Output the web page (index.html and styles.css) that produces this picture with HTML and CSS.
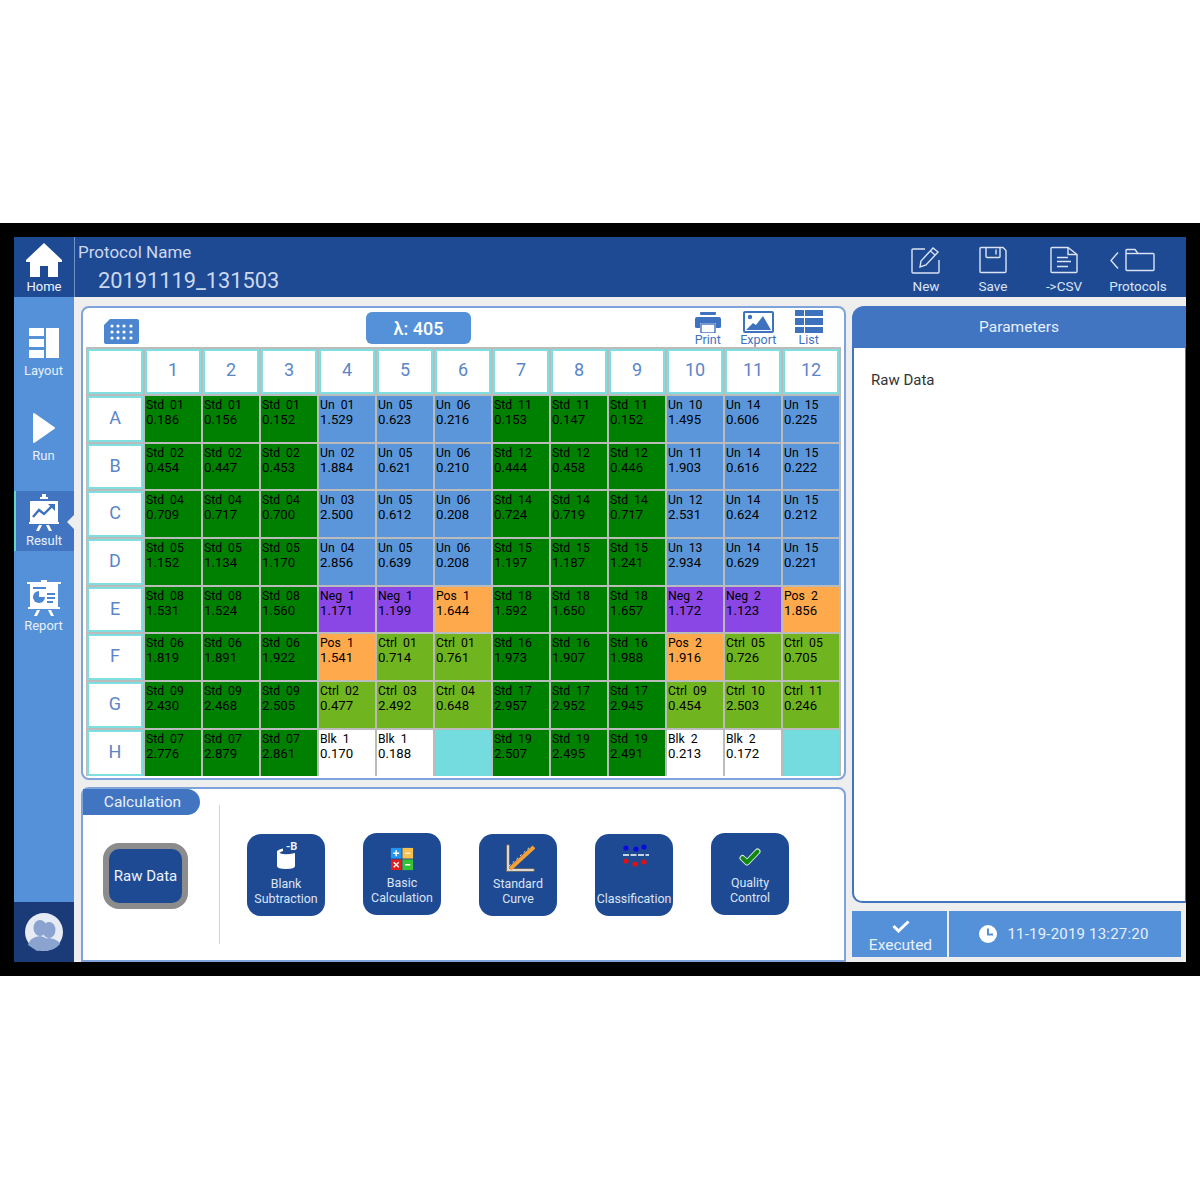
FILE: index.html
```html
<!DOCTYPE html>
<html lang="en">
<head>
  <meta charset="UTF-8">
  <title>Plate Reader - Result</title>
  <link rel="stylesheet" href="styles.css">
</head>
<body>
  <div class="frame">
    <div class="app">
      <aside class="side">
        <a class="home">
          <svg class="home-icon" viewBox="0 0 36 34"><path fill="#fff" d="M18 0 L36 17 L36 19 L32 19 L32 34 L22 34 L22 23 L14 23 L14 34 L4 34 L4 19 L0 19 L0 17 Z"/></svg>
          <span>Home</span>
        </a>
        <nav class="nav">
          <a class="nav-item">
            <svg width="30" height="30" viewBox="0 0 30 30"><g fill="#fff"><rect x="0" y="0" width="15" height="8"/><rect x="0" y="11" width="15" height="8"/><rect x="0" y="22" width="15" height="8"/><rect x="17" y="0" width="13" height="30"/></g></svg>
            <span>Layout</span>
          </a>
          <a class="nav-item">
            <svg width="22" height="30" viewBox="0 0 22 30"><path fill="#fff" stroke="#fff" stroke-width="2" stroke-linejoin="round" d="M1 1 L21 15 L1 29 Z"/></svg>
            <span>Run</span>
          </a>
          <a class="nav-item nav-active nav-tall">
            <svg width="30" height="37" viewBox="0 0 30 37"><g fill="#fff"><rect x="13" y="0" width="4" height="3"/><rect x="11" y="3" width="8" height="2"/><rect x="1" y="7" width="28" height="21"/><rect x="0" y="28" width="30" height="2"/><path d="M10 31 h3 l-3 6 h-3 z M17 31 h3 l3 6 h-3 z"/></g><path fill="none" stroke="#3f72be" stroke-width="2.4" d="M4 23 L10 16 L15 20 L23 12"/><path fill="#3f72be" d="M19 10 h7 v7 z"/></svg>
            <span>Result</span>
          </a>
          <a class="nav-item nav-tall">
            <svg width="34" height="36" viewBox="0 0 34 36"><g fill="#fff"><rect x="14" y="0" width="6" height="2"/><rect x="0" y="2" width="34" height="2"/><rect x="3" y="4" width="28" height="23"/><rect x="1" y="27" width="32" height="2"/><path d="M10 30 h3 l-3 6 h-3 z M21 30 h3 l3 6 h-3 z"/></g><rect x="6" y="7" width="13" height="2" fill="#4d86d0"/><circle cx="12" cy="17" r="6" fill="#4d86d0"/><path d="M12 17 V11 H18 V17 Z" fill="#fff"/><g fill="#4d86d0"><rect x="20" y="13" width="8" height="2"/><rect x="20" y="17" width="8" height="2"/><rect x="20" y="21" width="6" height="2"/></g></svg>
            <span>Report</span>
          </a>
        </nav>
        <div class="user">
          <svg width="38" height="38" viewBox="0 0 38 38"><circle cx="19" cy="19" r="19" fill="#e6ebf6"/><g fill="#8aa3cf"><ellipse cx="15" cy="15" rx="6.5" ry="8"/><path d="M3 32 C5 25 10 24 15 23 C20 24 24 25 25 36 L12 38 Z"/><ellipse cx="24" cy="17" rx="6.5" ry="8"/><path d="M12 36 C13 28 18 26 24 25 C30 26 34 28 35 31 C31 36 24 38 19 38 Z"/></g></svg>
        </div>
      </aside>

      <div class="main">
        <header class="top">
          <div class="protocol">
            <div class="protocol-label">Protocol Name</div>
            <div class="protocol-name">20191119_131503</div>
          </div>
          <div class="top-tools">
            <a class="top-tool">
              <svg width="30" height="28" viewBox="0 0 30 28" fill="none" stroke="#dbe4f4" stroke-width="1.4"><path d="M14 3 H2 Q1 3 1 4 V26 Q1 27 2 27 H27 Q28 27 28 26 V14"/><path d="M9 21 L10 15 L22 2 L27 6 L15 19 Z"/><path d="M19.5 5 L24 9"/></svg>
              <span>New</span>
            </a>
            <a class="top-tool">
              <svg width="28" height="27" viewBox="0 0 28 27" fill="none" stroke="#dbe4f4" stroke-width="1.4"><path d="M2 1 H24 L27 4 V25 Q27 26 26 26 H2 Q1 26 1 25 V2 Q1 1 2 1 Z"/><path d="M7 1 V10 Q7 11 8 11 H20 Q21 11 21 10 V1"/><path d="M17 3 V8"/></svg>
              <span>Save</span>
            </a>
            <a class="top-tool tool-csv">
              <svg width="28" height="27" viewBox="0 0 28 27" fill="none" stroke="#dbe4f4" stroke-width="1.4"><path d="M2 1 H18 L27 8 V25 Q27 26 26 26 H2 Q1 26 1 25 V2 Q1 1 2 1 Z"/><path d="M18 1 V8 H27"/><path d="M7 11 H18 M7 15 H21 M7 20 H18"/></svg>
              <span>-&gt;CSV</span>
            </a>
            <a class="top-tool tool-protocols">
              <svg width="58" height="27" viewBox="0 0 58 27" fill="none" stroke="#dbe4f4" stroke-width="1.4"><path d="M9 6 L2 14 L9 22"/><path d="M17 23 V4 Q17 3 18 3 H26 L29 7 H44 Q45 7 45 8 V23 Q45 24 44 24 H18 Q17 24 17 23 Z"/><path d="M29 7 H17"/></svg>
              <span>Protocols</span>
            </a>
          </div>
        </header>

        <div class="content">
          <div class="left">
            <section class="panel plate">
              <div class="plate-bar">
                <svg class="plate-icon" width="35" height="25" viewBox="0 0 35 25"><path fill="#4d86d0" d="M6 0 H33 Q35 0 35 2 V23 Q35 25 33 25 H2 Q0 25 0 23 V6 Z"/><g fill="#fff"><circle cx="8" cy="7" r="1.6"/><circle cx="14" cy="7" r="1.6"/><circle cx="20" cy="7" r="1.6"/><circle cx="27" cy="7" r="1.6"/><circle cx="8" cy="13" r="1.6"/><circle cx="14" cy="13" r="1.6"/><circle cx="20" cy="13" r="1.6"/><circle cx="27" cy="13" r="1.6"/><circle cx="8" cy="19" r="1.6"/><circle cx="14" cy="19" r="1.6"/><circle cx="20" cy="19" r="1.6"/><circle cx="27" cy="19" r="1.6"/></g></svg>
                <button class="wave">λ: 405</button>
                <div class="plate-tools">
                  <a class="plate-tool">
                    <svg width="26" height="21" viewBox="0 0 26 21"><g fill="#3f72be"><rect x="5" y="0" width="16" height="3" rx="1"/><path d="M2 5 H24 Q26 5 26 7 V15 Q26 16 24 16 H21 V11 H5 V16 H2 Q0 16 0 15 V7 Q0 5 2 5 Z"/></g><rect x="6" y="12" width="14" height="9" fill="#fff" stroke="#3f72be" stroke-width="1.4"/></svg>
                    <span>Print</span>
                  </a>
                  <a class="plate-tool">
                    <svg width="31" height="22" viewBox="0 0 31 22"><rect x="1" y="1" width="29" height="20" rx="1" fill="#fff" stroke="#3f72be" stroke-width="2"/><circle cx="7" cy="6" r="2.2" fill="#3f72be"/><path fill="#3f72be" d="M3 19 L10 12 L13 14 L20 5 L28 19 Z"/></svg>
                    <span>Export</span>
                  </a>
                  <a class="plate-tool">
                    <svg width="28" height="23" viewBox="0 0 28 23"><g fill="#3f72be"><rect x="0" y="0" width="9" height="6"/><rect x="10" y="0" width="18" height="6"/><rect x="0" y="8" width="9" height="7"/><rect x="10" y="8" width="18" height="7"/><rect x="0" y="17" width="9" height="6"/><rect x="10" y="17" width="18" height="6"/></g></svg>
                    <span>List</span>
                  </a>
                </div>
              </div>

              <div class="grid">
                <div class="hd hd-col"></div>
                <div class="hd hd-col">1</div><div class="hd hd-col">2</div><div class="hd hd-col">3</div><div class="hd hd-col">4</div><div class="hd hd-col">5</div><div class="hd hd-col">6</div><div class="hd hd-col">7</div><div class="hd hd-col">8</div><div class="hd hd-col">9</div><div class="hd hd-col">10</div><div class="hd hd-col">11</div><div class="hd hd-col">12</div>

                <div class="hd">A</div>
                <div class="well std"><b>Std 01</b>0.186</div><div class="well std"><b>Std 01</b>0.156</div><div class="well std"><b>Std 01</b>0.152</div>
                <div class="well un"><b>Un 01</b>1.529</div><div class="well un"><b>Un 05</b>0.623</div><div class="well un"><b>Un 06</b>0.216</div>
                <div class="well std"><b>Std 11</b>0.153</div><div class="well std"><b>Std 11</b>0.147</div><div class="well std"><b>Std 11</b>0.152</div>
                <div class="well un"><b>Un 10</b>1.495</div><div class="well un"><b>Un 14</b>0.606</div><div class="well un"><b>Un 15</b>0.225</div>

                <div class="hd">B</div>
                <div class="well std"><b>Std 02</b>0.454</div><div class="well std"><b>Std 02</b>0.447</div><div class="well std"><b>Std 02</b>0.453</div>
                <div class="well un"><b>Un 02</b>1.884</div><div class="well un"><b>Un 05</b>0.621</div><div class="well un"><b>Un 06</b>0.210</div>
                <div class="well std"><b>Std 12</b>0.444</div><div class="well std"><b>Std 12</b>0.458</div><div class="well std"><b>Std 12</b>0.446</div>
                <div class="well un"><b>Un 11</b>1.903</div><div class="well un"><b>Un 14</b>0.616</div><div class="well un"><b>Un 15</b>0.222</div>

                <div class="hd">C</div>
                <div class="well std"><b>Std 04</b>0.709</div><div class="well std"><b>Std 04</b>0.717</div><div class="well std"><b>Std 04</b>0.700</div>
                <div class="well un"><b>Un 03</b>2.500</div><div class="well un"><b>Un 05</b>0.612</div><div class="well un"><b>Un 06</b>0.208</div>
                <div class="well std"><b>Std 14</b>0.724</div><div class="well std"><b>Std 14</b>0.719</div><div class="well std"><b>Std 14</b>0.717</div>
                <div class="well un"><b>Un 12</b>2.531</div><div class="well un"><b>Un 14</b>0.624</div><div class="well un"><b>Un 15</b>0.212</div>

                <div class="hd">D</div>
                <div class="well std"><b>Std 05</b>1.152</div><div class="well std"><b>Std 05</b>1.134</div><div class="well std"><b>Std 05</b>1.170</div>
                <div class="well un"><b>Un 04</b>2.856</div><div class="well un"><b>Un 05</b>0.639</div><div class="well un"><b>Un 06</b>0.208</div>
                <div class="well std"><b>Std 15</b>1.197</div><div class="well std"><b>Std 15</b>1.187</div><div class="well std"><b>Std 15</b>1.241</div>
                <div class="well un"><b>Un 13</b>2.934</div><div class="well un"><b>Un 14</b>0.629</div><div class="well un"><b>Un 15</b>0.221</div>

                <div class="hd">E</div>
                <div class="well std"><b>Std 08</b>1.531</div><div class="well std"><b>Std 08</b>1.524</div><div class="well std"><b>Std 08</b>1.560</div>
                <div class="well neg"><b>Neg 1</b>1.171</div><div class="well neg"><b>Neg 1</b>1.199</div><div class="well pos"><b>Pos 1</b>1.644</div>
                <div class="well std"><b>Std 18</b>1.592</div><div class="well std"><b>Std 18</b>1.650</div><div class="well std"><b>Std 18</b>1.657</div>
                <div class="well neg"><b>Neg 2</b>1.172</div><div class="well neg"><b>Neg 2</b>1.123</div><div class="well pos"><b>Pos 2</b>1.856</div>

                <div class="hd">F</div>
                <div class="well std"><b>Std 06</b>1.819</div><div class="well std"><b>Std 06</b>1.891</div><div class="well std"><b>Std 06</b>1.922</div>
                <div class="well pos"><b>Pos 1</b>1.541</div><div class="well ctrl"><b>Ctrl 01</b>0.714</div><div class="well ctrl"><b>Ctrl 01</b>0.761</div>
                <div class="well std"><b>Std 16</b>1.973</div><div class="well std"><b>Std 16</b>1.907</div><div class="well std"><b>Std 16</b>1.988</div>
                <div class="well pos"><b>Pos 2</b>1.916</div><div class="well ctrl"><b>Ctrl 05</b>0.726</div><div class="well ctrl"><b>Ctrl 05</b>0.705</div>

                <div class="hd">G</div>
                <div class="well std"><b>Std 09</b>2.430</div><div class="well std"><b>Std 09</b>2.468</div><div class="well std"><b>Std 09</b>2.505</div>
                <div class="well ctrl"><b>Ctrl 02</b>0.477</div><div class="well ctrl"><b>Ctrl 03</b>2.492</div><div class="well ctrl"><b>Ctrl 04</b>0.648</div>
                <div class="well std"><b>Std 17</b>2.957</div><div class="well std"><b>Std 17</b>2.952</div><div class="well std"><b>Std 17</b>2.945</div>
                <div class="well ctrl"><b>Ctrl 09</b>0.454</div><div class="well ctrl"><b>Ctrl 10</b>2.503</div><div class="well ctrl"><b>Ctrl 11</b>0.246</div>

                <div class="hd">H</div>
                <div class="well std"><b>Std 07</b>2.776</div><div class="well std"><b>Std 07</b>2.879</div><div class="well std"><b>Std 07</b>2.861</div>
                <div class="well blk"><b>Blk 1</b>0.170</div><div class="well blk"><b>Blk 1</b>0.188</div><div class="well none"></div>
                <div class="well std"><b>Std 19</b>2.507</div><div class="well std"><b>Std 19</b>2.495</div><div class="well std"><b>Std 19</b>2.491</div>
                <div class="well blk"><b>Blk 2</b>0.213</div><div class="well blk"><b>Blk 2</b>0.172</div><div class="well none"></div>
              </div>
            </section>

            <section class="panel calc">
              <div class="calc-left">
                <div class="calc-tab">Calculation</div>
                <button class="raw">Raw Data</button>
              </div>
              <div class="calc-tools">
                <a class="calc-tool">
                  <svg width="40" height="34" viewBox="0 0 40 34"><path fill="#fff" d="M11 10 Q13 8 17 7.5 V10 Q14 11 13.5 12 Q19 14.5 29 12 V25 Q29 28 20 28 Q11 28 11 25 Z"/><text class="minus-b" x="20" y="9">-B</text></svg>
                  <span>Blank<br>Subtraction</span>
                </a>
                <a class="calc-tool tool-high tool-basic">
                  <svg width="24" height="24" viewBox="0 0 26 26"><rect x="1" y="1" width="11.5" height="11.5" fill="#2196f3"/><rect x="13.5" y="1" width="11.5" height="11.5" fill="#f7c04f"/><rect x="1" y="13.5" width="11.5" height="11.5" fill="#e51c1c"/><rect x="13.5" y="13.5" width="11.5" height="11.5" fill="#36c236"/><path stroke="#fff" stroke-width="1.6" d="M3.5 6.7 H10 M6.7 3.5 V10 M4 16.5 L9.5 22 M9.5 16.5 L4 22 M16.5 19.2 H22"/><path stroke="#fff" stroke-width="1.2" d="M16.5 6.7 H22"/></svg>
                  <span>Basic<br>Calculation</span>
                </a>
                <a class="calc-tool tool-curve">
                  <svg width="34" height="30" viewBox="0 0 34 30"><path fill="none" stroke="#666" stroke-width="4" stroke-linecap="round" d="M7 3 V27 H32"/><path fill="none" stroke="#d8d8d8" stroke-width="2" stroke-linecap="round" d="M7 3 V27 H32"/><path fill="none" stroke="#f5a033" stroke-width="4" d="M9 26 L33 4"/><path fill="none" stroke="#e8e8e8" stroke-width="1" stroke-dasharray="2 3" d="M8 23 L30 3"/></svg>
                  <span>Standard<br>Curve</span>
                </a>
                <a class="calc-tool">
                  <svg width="30" height="26" viewBox="0 0 30 26"><g fill="#0a0ae0"><circle cx="7" cy="7" r="2.6"/><circle cx="17" cy="8" r="2.6"/><circle cx="25" cy="6" r="2.6"/></g><path stroke="#fff" stroke-width="1.6" stroke-dasharray="6 1.5" d="M4 14 H30"/><g fill="#e01010"><circle cx="7" cy="20" r="2.6"/><circle cx="16" cy="23" r="2.6"/><circle cx="25" cy="21" r="2.6"/></g></svg>
                  <span class="tool-wide"><br>Classification</span>
                </a>
                <a class="calc-tool tool-high tool-check">
                  <svg width="22" height="18" viewBox="0 0 22 18"><path fill="none" stroke="#dfe8df" stroke-width="6" stroke-linecap="round" stroke-linejoin="round" d="M3.5 10 L8 14.5 L18.5 3.5"/><path fill="none" stroke="#0f8a0f" stroke-width="4" stroke-linecap="round" stroke-linejoin="round" d="M3.5 10 L8 14.5 L18.5 3.5"/></svg>
                  <span>Quality<br>Control</span>
                </a>
              </div>
            </section>
          </div>

          <div class="right">
            <section class="params">
              <div class="params-head">Parameters</div>
              <div class="params-body">Raw Data</div>
            </section>
            <div class="status">
              <div class="status-done">
                <svg width="18" height="13" viewBox="0 0 18 13"><path fill="none" stroke="#fff" stroke-width="3" d="M1.5 6 L6.5 11 L16.5 1.5"/></svg>
                <span>Executed</span>
              </div>
              <div class="status-time">
                <svg width="18" height="18" viewBox="0 0 18 18"><circle cx="9" cy="9" r="9" fill="#fff"/><path fill="none" stroke="#5591d8" stroke-width="2" d="M9 3.5 V9.5 H14"/></svg>
                <span>11-19-2019 13:27:20</span>
              </div>
            </div>
          </div>
        </div>
      </div>
    </div>
  </div>
</body>
</html>
```
FILE: styles.css
```css
:root {
  --dark-blue: #1e4a94;
  --mid-blue: #4175c2;
  --light-blue: #5591d8;
  --page-grey: #eeeeee;
  --panel-line: #7ea3da;
  --teal: #7fdfe0;
}

* {
  margin: 0;
  padding: 0;
  box-sizing: border-box;
}

body {
  background-color: #fff;
  font-family: Roboto, "Liberation Sans", sans-serif;
  padding-top: 223px;
}

.frame {
  background-color: #000;
  height: 753px;
  padding: 14px;
}

.app {
  display: flex;
  height: 725px;
  background-color: var(--page-grey);
}

/* left rail */
.side {
  width: 60px;
  display: flex;
  flex-direction: column;
  background-color: var(--light-blue);
  color: #e8f0fb;
  font-size: 13px;
}

.home {
  height: 60px;
  background-color: var(--dark-blue);
  display: flex;
  flex-direction: column;
  align-items: center;
  padding-top: 6px;
  color: #eef3fb;
}

.home-icon {
  width: 36px;
  height: 34px;
  margin-bottom: 2px;
}

.nav {
  flex: 1;
  display: flex;
  flex-direction: column;
  gap: 25px;
  padding-top: 24px;
}

.nav-item {
  position: relative;
  height: 60px;
  display: flex;
  flex-direction: column;
  align-items: center;
  justify-content: flex-end;
  gap: 5px;
  padding: 0 1px 3px 0;
}

.nav-tall {
  gap: 2px;
}

.nav-active {
  background-color: var(--mid-blue);
  border-left: 2px solid #5fd6c6;
  padding-right: 2px;
}

/* notch pointing at the page */
.nav-active::after {
  content: "";
  position: absolute;
  right: 0;
  top: 24px;
  border: 7px solid transparent;
  border-right-color: var(--page-grey);
  border-left-width: 0;
}

.user {
  height: 60px;
  background-color: #1a3a78;
  display: flex;
  align-items: center;
  justify-content: center;
}

.main {
  flex: 1;
  display: flex;
  flex-direction: column;
  min-width: 0;
}

/* header */
.top {
  height: 60px;
  background-color: var(--dark-blue);
  border-left: 1px solid #6f92c9;
  display: flex;
  justify-content: space-between;
}

.protocol {
  padding: 5px 0 0 3px;
  color: #cbd8ee;
}

.protocol-label {
  font-size: 17px;
  line-height: 20px;
}

.protocol-name {
  font-size: 21.8px;
  line-height: 28px;
  margin: 5px 0 0 20px;
}

.top-tools {
  display: flex;
  gap: 7px;
  padding: 9px 18px 0 0;
}

.top-tool {
  width: 60px;
  display: flex;
  flex-direction: column;
  align-items: center;
  color: #dbe4f4;
  font-size: 13.5px;
}

.top-tool svg {
  height: 28px;
  margin-bottom: 4px;
}

.tool-csv {
  margin-left: 4px;
}

.tool-protocols {
  margin-left: 7px;
}

.content {
  flex: 1;
  display: flex;
  gap: 6px;
  padding: 9px 0 0 7px;
  min-height: 0;
}

.left {
  width: 765px;
  display: flex;
  flex-direction: column;
  gap: 7px;
}

.panel {
  background-color: #fff;
  border: 2px solid var(--panel-line);
  border-radius: 8px;
}

/* plate */
.plate {
  height: 474px;
  padding: 0 3px;
}

.plate-bar {
  height: 39px;
  display: flex;
  align-items: flex-start;
}

.plate-icon {
  margin: 11px 0 0 18px;
}

.wave {
  width: 105px;
  height: 32px;
  margin: 4px 0 0 227px;
  border: 0;
  border-radius: 6px;
  background-color: var(--light-blue);
  color: #fff;
  font-family: inherit;
  font-size: 18px;
  font-weight: 500;
}

.plate-tools {
  margin-left: auto;
  display: flex;
  padding-right: 7px;
}

.plate-tool {
  width: 50.5px;
  height: 39px;
  display: flex;
  flex-direction: column;
  align-items: center;
  justify-content: flex-end;
  color: #3f72be;
  font-size: 12.5px;
  line-height: 14px;
}

.grid {
  display: grid;
  grid-template-columns: repeat(13, 56px);
  grid-template-rows: 45px repeat(8, 45.7px);
  gap: 2px;
  padding: 2px 0 0 1px;
  width: 755px;
  background-color: #bbb;
}

.hd {
  background-color: #fff;
  border: 2px solid var(--teal);
  color: #5a86c8;
  font-size: 18px;
  padding-bottom: 3px;
  display: flex;
  align-items: center;
  justify-content: center;
}

.hd-col {
  padding-bottom: 5px;
}

.well {
  color: #000;
  font-size: 13.2px;
  line-height: 15px;
  padding: 2px 0 0 1px;
}

.well b {
  display: block;
  font-size: 12.2px;
  font-weight: 400;
  line-height: 14px;
  word-spacing: 3px;
}

.std { background-color: #008000; }
.un { background-color: #5a96d9; }
.neg { background-color: #8a47e6; }
.pos { background-color: #ffa94d; }
.ctrl { background-color: #70b520; }
.blk { background-color: #fff; }
.none { background-color: #74dcdf; }

/* calculation */
.calc {
  flex: 1;
  border-radius: 8px 8px 0 0;
  display: flex;
}

.calc-left {
  width: 136px;
}

.calc-tab {
  width: 117px;
  height: 26px;
  background-color: var(--mid-blue);
  border-radius: 0 13px 13px 0;
  color: #e8f0fb;
  font-size: 15.5px;
  line-height: 27px;
  padding-left: 2px;
  text-align: center;
}

.raw {
  display: block;
  width: 85px;
  height: 66px;
  margin: 28px 0 0 20px;
  border: 6px solid #8c8c8c;
  border-radius: 16px;
  background-color: var(--dark-blue);
  color: #eef3fb;
  font-family: inherit;
  font-size: 15px;
}

.calc-tools {
  height: 139px;
  margin-top: 16px;
  border-left: 1px solid #c9d6ec;
  padding: 29px 0 0 27px;
  display: flex;
  align-items: flex-start;
  gap: 38px;
}

.calc-tool {
  width: 78px;
  height: 82px;
  background-color: var(--dark-blue);
  border-radius: 14px;
  color: #dbe4f4;
  font-size: 12.4px;
  line-height: 14.5px;
  text-align: center;
  display: flex;
  flex-direction: column;
  align-items: center;
  justify-content: flex-end;
  padding-bottom: 10px;
}

.calc-tool svg {
  margin-bottom: auto;
  margin-top: 7px;
}

.tool-high {
  margin-top: -1px;
}

.tool-basic svg {
  margin-top: 14px;
}

.tool-curve svg {
  margin-top: 9px;
}

.tool-check svg {
  margin-top: 15px;
}

.tool-wide {
  white-space: nowrap;
}

.minus-b {
  fill: #eef3fb;
  font-size: 11px;
  font-weight: 700;
  font-family: Roboto, sans-serif;
}

/* right column */
.right {
  flex: 1;
  display: flex;
  flex-direction: column;
}

.params {
  height: 597px;
  display: flex;
  flex-direction: column;
}

.params-head {
  height: 42px;
  background-color: var(--mid-blue);
  border-radius: 12px 0 0 0;
  color: #e8f0fb;
  font-size: 15.5px;
  line-height: 42px;
  text-align: center;
}

.params-body {
  flex: 1;
  background-color: #fff;
  border: 2px solid var(--mid-blue);
  border-width: 0 1px 2px 2px;
  border-radius: 0 0 0 10px;
  padding: 23px 0 0 17px;
  color: #333;
  font-size: 15px;
}

.status {
  display: flex;
  gap: 2px;
  width: 329px;
  height: 46px;
  margin-top: 8px;
  color: #e8f0fb;
}

.status-done {
  width: 95px;
  background-color: var(--light-blue);
  display: flex;
  flex-direction: column;
  align-items: center;
  padding: 9px 0 0 2px;
  font-size: 15.5px;
  line-height: 18px;
  gap: 3px;
}

.status-time {
  flex: 1;
  background-color: var(--light-blue);
  display: flex;
  align-items: center;
  justify-content: center;
  gap: 10px;
  padding-right: 2px;
  font-size: 15px;
  letter-spacing: 0.2px;
}
```
